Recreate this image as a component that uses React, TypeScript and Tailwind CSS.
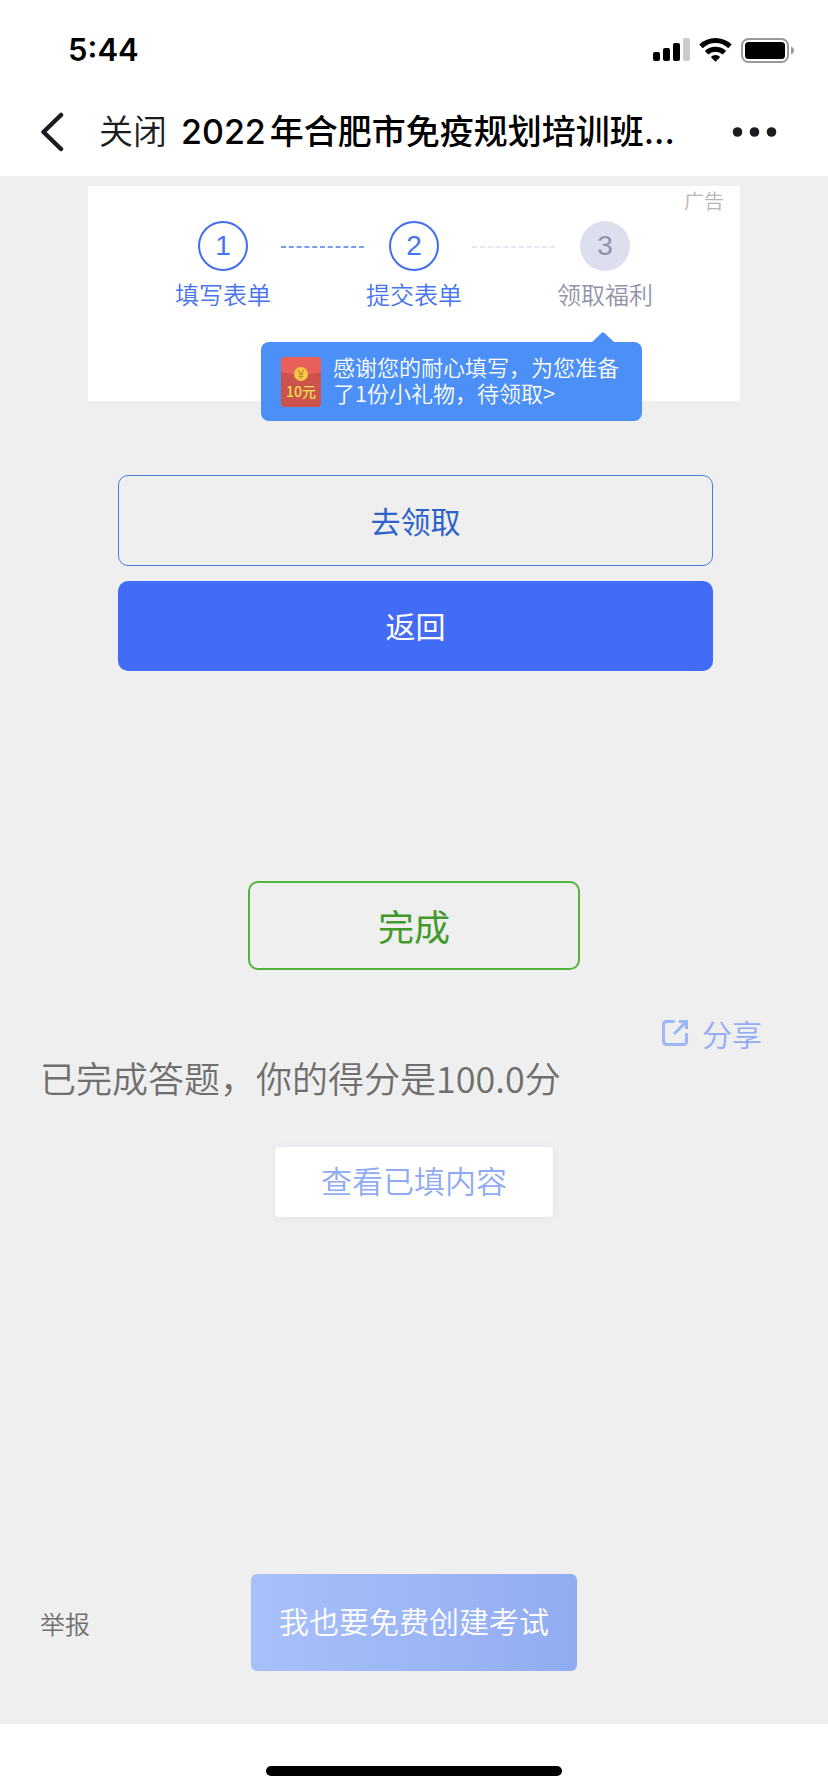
import { Fragment } from "react";
import clsx from "clsx";

const steps = [
  { n: 1, label: "填写表单", done: true },
  { n: 2, label: "提交表单", done: true },
  { n: 3, label: "领取福利", done: false },
];

function StatusBar() {
  return (
    <div className="flex h-22 items-center justify-between pt-3 pr-[34px] pl-[68px]">
      <span className="font-['Inter',sans-serif] text-[31px] leading-9 font-semibold">5:44</span>
      <div className="flex items-center gap-[9px]">
        <svg width="37" height="24" viewBox="0 0 37 24">
          <rect x="0" y="14" width="7" height="9" rx="2" />
          <rect x="10" y="10" width="7" height="13" rx="2" />
          <rect x="20" y="5" width="7" height="18" rx="2" />
          <rect x="30" y="0" width="7" height="23" rx="2" fill="#cccccc" />
        </svg>
        <svg width="33" height="24" viewBox="0 0 33 24" fill="none" stroke="#000" strokeWidth="5">
          <path d="M2 8.4a21 21 0 0 1 29 0" />
          <path d="M7.6 14.8a13 13 0 0 1 17.8 0" />
          <path d="M16.5 23.8l-4.7-4.9a6.8 6.8 0 0 1 9.4 0z" fill="#000" stroke="none" />
        </svg>
        <svg width="53" height="25" viewBox="0 0 53 25">
          <rect x="1" y="1" width="46" height="23" rx="6.5" fill="none" stroke="#999" strokeWidth="2" />
          <rect x="4" y="4" width="40" height="17" rx="3.5" />
          <path d="M50 8.5c4 1.5 4 6.500 0 8z" fill="#999" />
        </svg>
      </div>
    </div>
  );
}

function NavBar() {
  return (
    <header className="flex h-22 items-center pr-[51px] pl-10">
      <button aria-label="返回上一页" className="mr-[35px] shrink-0">
        <svg width="24" height="40" viewBox="0 0 24 40" fill="none" stroke="#1b1c20" strokeWidth="4.500" strokeLinecap="round" strokeLinejoin="round">
          <path d="M21 3L3.500 20L21 37" />
        </svg>
      </button>
      <button className="mr-3.5 shrink-0 pb-1 text-[34px] leading-10 font-[350] text-[#1b1c20]">关闭</button>
      <h1 className="flex min-w-0 flex-1 gap-1 overflow-hidden font-['Inter','Noto_Sans_CJK_SC',sans-serif] text-[34px] leading-10 font-medium whitespace-nowrap">
        <span>2022</span>
        <span>年合肥市免疫规划培训班...</span>
      </h1>
      <button aria-label="更多" className="shrink-0">
        <svg width="45" height="12" viewBox="0 0 45 12" fill="#1b1c20">
          <circle cx="5.500" cy="6" r="4.800" />
          <circle cx="22.500" cy="6" r="4.800" />
          <circle cx="39.500" cy="6" r="4.800" />
        </svg>
      </button>
    </header>
  );
}

function RedPacket() {
  return (
    <svg width="40" height="50" viewBox="0 0 40 50" className="shrink-0">
      <rect width="40" height="50" rx="4" fill="#cc524c" />
      <path d="M0 15V4a4 4 0 0 1 4-4h32a4 4 0 0 1 4 4v11q-20 5-40 0z" fill="#e95f5a" />
      <circle cx="20" cy="17" r="7" fill="#f6cb45" />
      <path d="M17 12.500l3 4.500l3-4.500M20 17v5M17.500 17h5M17.500 19.500h5" fill="none" stroke="#c98a2c" strokeWidth="1.200" />
      <text x="20" y="40" textAnchor="middle" fontSize="14" fontWeight="500" fill="#f8e04f">
        10元
      </text>
    </svg>
  );
}

function AdCard() {
  return (
    <section className="relative mx-[88px] h-[215px] bg-white pt-[35px]">
      <span className="absolute top-0 right-4 text-[20px] leading-[30px] text-[#b5b5b5]">广告</span>
      <ol className="flex justify-center">
        {steps.map((s, i) => (
          <Fragment key={s.n}>
            {i > 0 && (
              <li aria-hidden="true" className="mt-[25px] mr-0.5 ml-2.5">
                <svg width="83" height="2" viewBox="0 0 83 2" stroke={s.done ? "#4a7ef0" : "#dcdeec"} strokeWidth="1.500">
                  <path d="M0 1H83" strokeDasharray="5 2.800" />
                </svg>
              </li>
            )}
            <li className="flex flex-col items-center gap-[5px]">
              <span
                className={clsx(
                  "flex size-[50px] items-center justify-center rounded-full font-['Liberation_Sans',sans-serif] text-[28px] leading-8",
                  s.done ? "border-2 border-[#416df0] text-[#4673f1]" : "bg-[#dddfee] text-[#8f92ae]",
                )}
              >
                {s.n}
              </span>
              <span className={clsx("text-[24px] leading-9", s.done ? "text-[#4673f1]" : "text-[#9193a8]")}>
                {s.label}
              </span>
            </li>
          </Fragment>
        ))}
      </ol>
      <a
        href="#gift"
        className="absolute right-[98px] -bottom-5 flex h-[79px] items-center gap-3 rounded-lg bg-[#4b8ff7] pr-[23px] pl-5 text-[22px] leading-[26px] text-white"
      >
        <svg width="24" height="11" viewBox="0 0 24 11" className="absolute -top-[10px] right-[27px]">
          <path d="M0 11L10.500 1Q12 -0.500 13.500 1L24 11z" fill="#4b8ff7" />
        </svg>
        <RedPacket />
        <span className="pb-1.5 whitespace-nowrap">
          感谢您的耐心填写，为您准备
          <br />
          了1份小礼物，待领取&gt;
        </span>
      </a>
    </section>
  );
}

export default function App() {
  return (
    <div className="flex min-h-screen flex-col bg-white font-['Noto_Sans_CJK_SC',sans-serif] text-black">
      <StatusBar />
      <NavBar />

      <main className="flex flex-1 flex-col bg-[#efefef] pt-[10px] font-[350]">
        <AdCard />

        <div className="mt-[74px] flex flex-col gap-[15px] pr-[115px] pl-[118px] text-[30px] leading-10 font-normal">
          <button className="h-[91px] rounded-[10px] border border-[#3f7fe0] pb-0.5 text-[#2c62cb]">去领取</button>
          <button className="h-[90px] rounded-[10px] bg-[#426bf6] pb-0.5 text-white">返回</button>
        </div>

        <button className="mt-[210px] h-[89px] w-[332px] self-center rounded-[10px] border-2 border-[#52b43b] pb-0.5 text-[36px] leading-10 font-normal text-[#429a2c]">
          完成
        </button>

        <a href="#share" className="mt-[43px] mr-[66px] flex items-center gap-3.5 self-end text-[30px] leading-10 text-[#92adf4]">
          <svg width="26" height="26" viewBox="0 0 26 26" fill="none" stroke="#9db6f5" strokeWidth="3">
            <path d="M12.500 1.500H4.500a3 3 0 0 0-3 3V21.500a3 3 0 0 0 3 3H21.500a3 3 0 0 0 3-3V13" />
            <path d="M17 1.500H24.500V9M24 2L12 14" />
          </svg>
          分享
        </a>

        <p className="pl-10 text-[36px] leading-12 text-[#6f6f6f]">已完成答题，你的得分是100.0分</p>

        <button className="mt-[46px] h-[70px] w-[278px] self-center rounded-sm bg-white pb-1 text-[31px] leading-10 text-[#8fabf4] shadow-[0_0_6px_#e0e4f4]">
          查看已填内容
        </button>

        <footer className="mt-auto grid grid-cols-[1fr_auto_1fr] items-center pb-[53px]">
          <a href="#report" className="pl-10 text-[25px] leading-9 text-[#6f6f6f]">
            举报
          </a>
          <button className="h-[97px] rounded-md bg-linear-to-r from-[#a8c0fa] to-[#92acf2] px-7 pb-1.5 text-[30px] leading-10 text-white">
            我也要免费创建考试
          </button>
        </footer>
      </main>

      <div className="flex h-[68px] items-end justify-center pb-4">
        <div className="h-2.5 w-[296px] rounded-full bg-black" />
      </div>
    </div>
  );
}
